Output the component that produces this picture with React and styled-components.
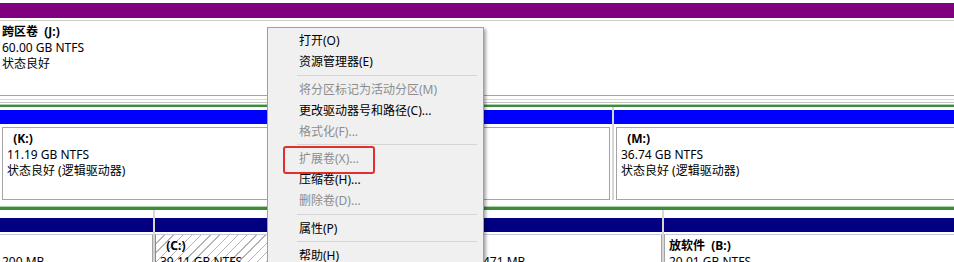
import React from 'react';
import styled, { createGlobalStyle, css } from 'styled-components';

const GlobalStyle = createGlobalStyle`
  html, body {
    margin: 0;
    padding: 0;
    background: #fff;
  }
  body {
    font-family: "Noto Sans", "Noto Sans CJK SC", sans-serif;
  }
`;

const Screen = styled.div`
  position: relative;
  width: 954px;
  height: 262px;
  overflow: hidden;
  background: #fff;
  font-size: 12px;
  color: #000;
`;

// the disk view runs past the right edge of the window
const DiskView = styled.div`
  width: 964px;
  display: flex;
  flex-direction: column;
`;

const DiskRow = styled.div`
  display: flex;
  gap: 2px;
  background: #d6d6d6;
  flex-shrink: 0;
`;

const Partition = styled.div`
  flex: ${props => (props.$w ? `0 0 ${props.$w}px` : '1 1 auto')};
  min-width: 0;
  display: flex;
  flex-direction: column;
  background: #fff;
  padding-top: ${props => props.$top || 3}px;
`;

const Bar = styled.div`
  height: ${props => props.$h || 14}px;
  background: ${props => props.$color};
`;

const Body = styled.div`
  margin: ${props => props.$gap || 3}px ${props => (props.$inset ? 2 : 0)}px 0;
  height: ${props => props.$height}px;
  padding: 3px 4px;
  border: 1px solid #a4a4a4;
  border-top-color: ${props => props.$topColor || '#a4a4a4'};
  line-height: 16px;
  white-space: pre;
  overflow: hidden;

  ${props => props.$edge && css`
    border-left: none;
    padding-left: 2px;
  `}

  ${props => props.$open && css`
    border-left: none;
    border-right: none;
    border-top-color: #cdcdcd;
    padding-left: 2px;
  `}

  ${props => props.$hatched && css`
    border-left: 1px solid #8a8a8a;
    background: repeating-linear-gradient(
      135deg,
      #ffffff 0px,
      #ffffff 5.5px,
      #b4b4b4 5.5px,
      #b4b4b4 6.5px
    );
  `}
`;

const Name = styled.div`
  font-weight: 700;
  min-height: 16px;
`;

const Line = styled.div``;

const Rule = styled.div`
  flex-shrink: 0;
  height: 1px;
  margin-top: 3px;
  background: #d8d8d8;
`;

const Extended = styled.div`
  flex-shrink: 0;
  margin-top: 2px;
  border-top: 1px solid #c4c4c4;
  padding-top: 1px;
`;

const GreenRule = styled.div`
  height: ${props => props.$h || 2}px;
  border-top: 1px solid #a9d3a9;
  background: #3f8a3f;
  margin-top: ${props => props.$mt || 0}px;
`;

const Menu = styled.div`
  position: absolute;
  left: 267px;
  top: 27px;
  width: 215px;
  height: 260px;
  padding-top: 2px;
  background: #f0f0f0;
  border: 1px solid #a0a0a0;
  box-shadow: 2px 2px 3px rgba(0, 0, 0, 0.35);
  font-family: "Noto Sans", "Noto Sans CJK SC", sans-serif;
  font-size: 12px;
`;

const Item = styled.div`
  position: relative;
  height: 21px;
  line-height: 21px;
  padding-left: 31px;
  color: ${props => (props.$disabled ? '#8d8d8d' : '#000')};
  white-space: nowrap;
`;

const Separator = styled.div`
  height: 6.5px;
  display: flex;
  align-items: center;
  margin: 0 6px 0 29px;

  &::after {
    content: '';
    flex: 1;
    height: 1px;
    background: #d5d5d5;
  }
`;

const Highlight = styled.span`
  position: absolute;
  left: 15px;
  top: -2px;
  width: 92px;
  height: 28px;
  box-sizing: border-box;
  border: 2px solid #e2302c;
  border-radius: 3px;
  pointer-events: none;
`;

const menuItems = [
  { label: '打开(O)' },
  { label: '资源管理器(E)' },
  { sep: true },
  { label: '将分区标记为活动分区(M)', disabled: true },
  { label: '更改驱动器号和路径(C)...' },
  { label: '格式化(F)...', disabled: true },
  { sep: true },
  { label: '扩展卷(X)...', disabled: true, marked: true },
  { label: '压缩卷(H)...' },
  { label: '删除卷(D)...', disabled: true },
  { sep: true },
  { label: '属性(P)' },
  { sep: true },
  { label: '帮助(H)' },
];

function ContextMenu() {
  return (
    <Menu>
      {menuItems.map((it, i) =>
        it.sep ? (
          <Separator key={i} />
        ) : (
          <Item key={i} $disabled={it.disabled}>
            {it.label}
            {it.marked && <Highlight />}
          </Item>
        )
      )}
    </Menu>
  );
}

export default function App() {
  return (
    <>
      <GlobalStyle />
      <Screen>
        <DiskView>
          <DiskRow>
            <Partition>
              <Bar $color="#800080" $h={15} />
              <Body $open $gap={2} $height={68}>
                <Name>{'跨区卷  (J:)'}</Name>
                <Line>60.00 GB NTFS</Line>
                <Line>状态良好</Line>
              </Body>
            </Partition>
          </DiskRow>
          <Rule />

          <Extended>
            <GreenRule />
            <DiskRow>
              <Partition $w={612}>
                <Bar $color="#0000ff" />
                <Body $inset $height={65}>
                  <Name>{'  (K:)'}</Name>
                  <Line>11.19 GB NTFS</Line>
                  <Line>状态良好 (逻辑驱动器)</Line>
                </Body>
              </Partition>
              <Partition>
                <Bar $color="#0000ff" />
                <Body $inset $height={65}>
                  <Name>{'  (M:)'}</Name>
                  <Line>36.74 GB NTFS</Line>
                  <Line>状态良好 (逻辑驱动器)</Line>
                </Body>
              </Partition>
            </DiskRow>
            <DiskRow>
              <Partition>
                <GreenRule $h={3} $mt={3} />
              </Partition>
            </DiskRow>
          </Extended>

          <DiskRow>
            <Partition $w={153} $top={8}>
              <Bar $color="#000080" />
              <Body $edge $gap={2} $topColor="#c8c8e4" $height={40}>
                <Name />
                <Line>200 MB</Line>
              </Body>
            </Partition>
            <Partition $w={321} $top={8}>
              <Bar $color="#000080" />
              <Body $hatched $gap={2} $topColor="#c8c8e4" $height={40}>
                <Name>{'  (C:)'}</Name>
                <Line>39.11 GB NTFS</Line>
              </Body>
            </Partition>
            <Partition $w={184} $top={8}>
              <Bar $color="#000080" />
              <Body $gap={2} $topColor="#c8c8e4" $height={40}>
                <Name />
                <Line>471 MB</Line>
              </Body>
            </Partition>
            <Partition $top={8}>
              <Bar $color="#000080" />
              <Body $gap={2} $topColor="#c8c8e4" $height={40}>
                <Name>{'放软件  (B:)'}</Name>
                <Line>20.01 GB NTFS</Line>
              </Body>
            </Partition>
          </DiskRow>
        </DiskView>

        <ContextMenu />
      </Screen>
    </>
  );
}
